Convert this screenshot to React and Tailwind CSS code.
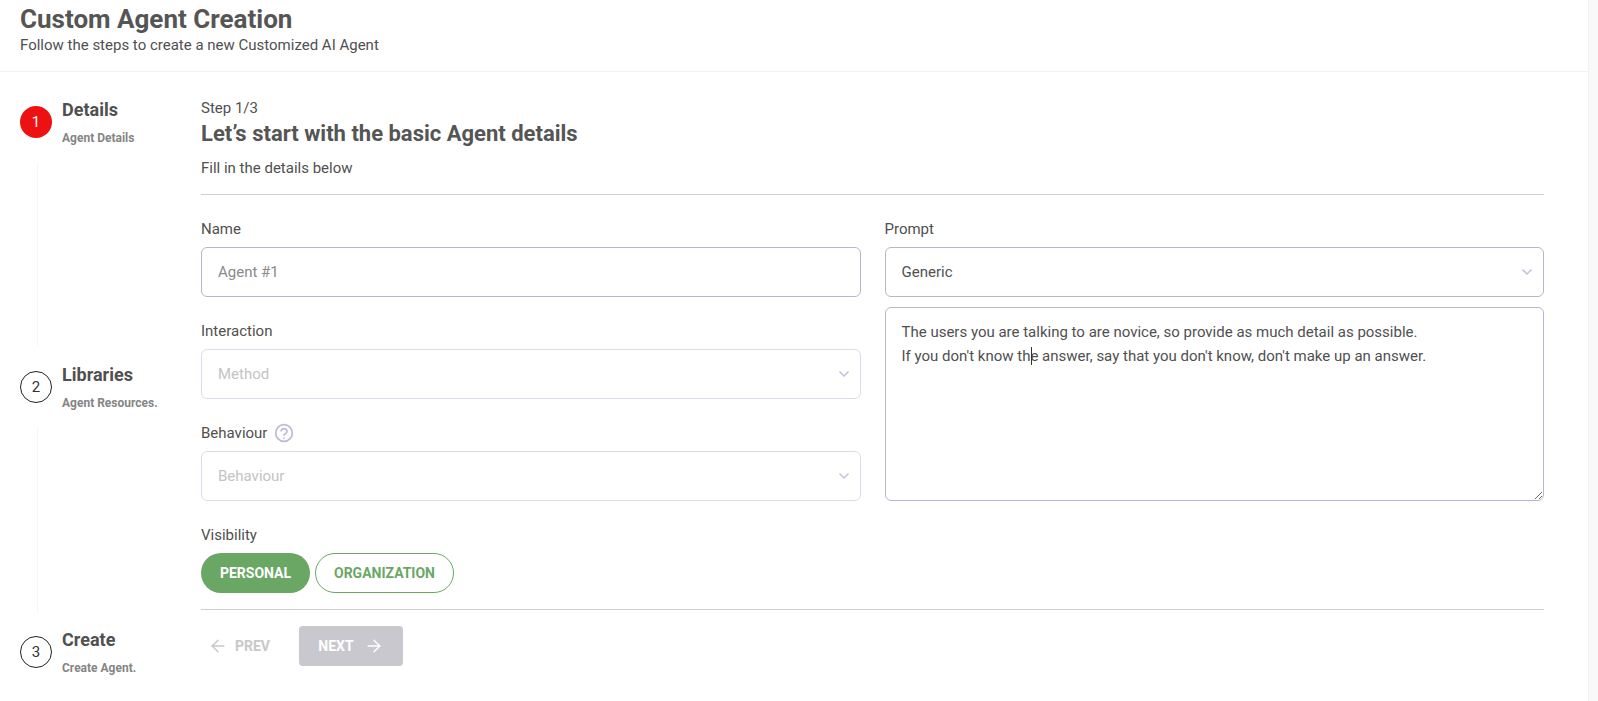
import { ArrowLeft, ArrowRight, ChevronDown } from 'lucide-react';

function StepHead({ num, title, sub, active }) {
  return (
    <div className="flex h-[62px]">
      <div
        className={`mt-[6px] w-8 h-8 rounded-full flex items-center justify-center text-[15px] shrink-0 ${
          active ? 'bg-[#ee1111] text-white' : 'border border-[#222222] text-[#333333]'
        }`}
      >
        {num}
      </div>
      <div className="ml-[10px]">
        <p className="text-[18px] leading-5 font-bold text-[#505050]">{title}</p>
        <p className="mt-[9px] text-xs leading-[18px] font-bold text-[#858585]">{sub}</p>
      </div>
    </div>
  );
}

function Select({ value, muted }) {
  return (
    <div
      className={`h-[50px] rounded-md border flex items-center justify-between pl-4 pr-2 text-[15px] ${
        muted ? 'border-[#dddcec] text-[#c4c4c4]' : 'border-[#b8b5d4] text-[#505050]'
      }`}
    >
      <span>{value}</span>
      <ChevronDown size={16} strokeWidth={2.5} className="text-[#c5c3dc]" />
    </div>
  );
}

function Label({ children }) {
  return <p className="text-[15px] leading-5 mb-2 text-[#505050]">{children}</p>;
}

export default function App() {
  return (
    <div className="flex h-[701px] overflow-hidden bg-white font-['Roboto',sans-serif]">
      <main className="flex-1 min-w-0">

        {/* Header */}
        <header className="h-[72px] border-b border-[#f2f2f2] px-5 pt-[5px]">
          <h1 className="text-[26px] leading-7 font-bold text-[#555555]">Custom Agent Creation</h1>
          <p className="text-[15px] leading-5 mt-[2px] text-[#505050]">Follow the steps to create a new Customized AI Agent</p>
        </header>

        <div className="flex">

          {/* Steps */}
          <aside className="w-[201px] shrink-0 pl-5 pt-7">
            <StepHead num="1" title="Details" sub="Agent Details" active />
            <div className="ml-[17px] h-[184px] w-px bg-[#f5f5f5] mb-[19px]" />
            <StepHead num="2" title="Libraries" sub="Agent Resources." />
            <div className="ml-[17px] h-[185px] w-px bg-[#f5f5f5] mb-[18px]" />
            <StepHead num="3" title="Create" sub="Create Agent." />
          </aside>

          {/* Form */}
          <section className="w-[1343px] pt-[26px]">
            <p className="text-[15px] leading-5 text-[#505050]">Step 1/3</p>
            <h2 className="mt-[2px] text-[22px] leading-7 font-bold text-[#555555]">Let’s start with the basic Agent details</h2>
            <p className="mt-[10px] text-[15px] leading-5 text-[#505050]">Fill in the details below</p>
            <div className="mt-4 mb-6 h-px bg-[#d0d0d0]" />

            <div className="grid grid-cols-2 gap-x-6">
              <div className="flex flex-col gap-6">
                <div>
                  <Label>Name</Label>
                  <input
                    readOnly
                    value="Agent #1"
                    className="w-full h-[50px] rounded-md border border-[#b8b5d4] px-4 text-[15px] text-[#8a8a8a] outline-none"
                  />
                </div>
                <div>
                  <Label>Interaction</Label>
                  <Select value="Method" muted />
                </div>
                <div>
                  <p className="flex items-center gap-[7px] h-5 text-[15px] leading-5 mb-2 text-[#505050]">
                    Behaviour
                    <svg width="20" height="20" viewBox="0 0 24 24" fill="none" stroke="#bcb9da" strokeWidth="2" strokeLinecap="round">
                      <circle cx="12" cy="12" r="10" />
                      <path d="M8.4 9.2a3.7 3.7 0 0 1 7.2 1c0 2.4-3.6 2.8-3.6 4.6" />
                      <path d="M12 18.2h.01" />
                    </svg>
                  </p>
                  <Select value="Behaviour" muted />
                </div>
              </div>

              <div>
                <Label>Prompt</Label>
                <Select value="Generic" />
                <div className="relative mt-[10px] h-[194px]">
                  <textarea
                    readOnly
                    defaultValue={"The users you are talking to are novice, so provide as much detail as possible.\nIf you don't know the answer, say that you don't know, don't make up an answer."}
                    className="block w-full h-full rounded-md border border-[#b8b5d4] px-4 py-3 text-[15px] leading-6 text-[#505050] outline-none"
                  />
                  <span className="absolute left-[146px] top-[40px] w-px h-[18px] bg-[#333333]" />
                </div>
              </div>
            </div>

            <div className="mt-6">
              <Label>Visibility</Label>
              <div className="flex gap-[5px]">
                <button className="w-[109px] h-10 rounded-full bg-[#6aa765] text-white text-sm font-bold">PERSONAL</button>
                <button className="w-[139px] h-10 rounded-full border border-[#6aa765] text-[#6aa765] text-sm font-bold">ORGANIZATION</button>
              </div>
            </div>

            <div className="mt-4 mb-4 h-px bg-[#d0d0d0]" />

            <div className="flex items-center">
              <button className="w-[98px] h-10 flex items-center pl-[7px] gap-[7px] text-[#c8c8c8] text-sm font-bold">
                <ArrowLeft size={20} strokeWidth={1.75} />
                PREV
              </button>
              <button className="w-[104px] h-10 rounded bg-[#c9c8cf] text-white text-sm font-bold flex items-center justify-center gap-[10px]">
                NEXT
                <ArrowRight size={20} strokeWidth={1.75} />
              </button>
            </div>
          </section>
        </div>
      </main>

      {/* Scrollbar strip */}
      <div className="w-[10px] shrink-0 bg-[#f9f9f9] border-l border-[#f2f2f2]" />
    </div>
  );
}
